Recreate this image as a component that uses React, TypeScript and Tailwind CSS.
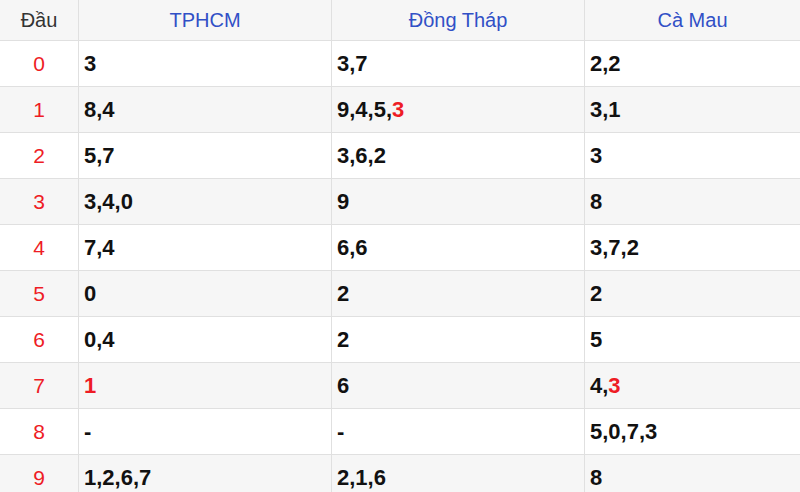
import React from "react";

type Part = { t: string; red?: boolean };

const rows: { d: string; cols: Part[][] }[] = [
  { d: "0", cols: [[{ t: "3" }], [{ t: "3,7" }], [{ t: "2,2" }]] },
  { d: "1", cols: [[{ t: "8,4" }], [{ t: "9,4,5," }, { t: "3", red: true }], [{ t: "3,1" }]] },
  { d: "2", cols: [[{ t: "5,7" }], [{ t: "3,6,2" }], [{ t: "3" }]] },
  { d: "3", cols: [[{ t: "3,4,0" }], [{ t: "9" }], [{ t: "8" }]] },
  { d: "4", cols: [[{ t: "7,4" }], [{ t: "6,6" }], [{ t: "3,7,2" }]] },
  { d: "5", cols: [[{ t: "0" }], [{ t: "2" }], [{ t: "2" }]] },
  { d: "6", cols: [[{ t: "0,4" }], [{ t: "2" }], [{ t: "5" }]] },
  { d: "7", cols: [[{ t: "1", red: true }], [{ t: "6" }], [{ t: "4," }, { t: "3", red: true }]] },
  { d: "8", cols: [[{ t: "-" }], [{ t: "-" }], [{ t: "5,0,7,3" }]] },
  { d: "9", cols: [[{ t: "1,2,6,7" }], [{ t: "2,1,6" }], [{ t: "8" }]] },
];

const provinces = ["TPHCM", "Đồng Tháp", "Cà Mau"];

export default function App() {
  return (
    <div className="w-[800px] h-[492px] overflow-hidden bg-white font-['Liberation_Sans',Arial,sans-serif]">
      <div className="grid grid-cols-[79px_253px_253px_1fr]">
        {/* Header */}
        <div className="h-[41px] flex items-center justify-center bg-[#f6f6f6] border-r border-b border-[#e0e0e0] text-[20px] text-[#333]">
          Đầu
        </div>
        {provinces.map((p, i) => (
          <div
            key={p}
            className={
              "h-[41px] flex items-center justify-center bg-[#f6f6f6] border-b border-[#e0e0e0] text-[20px] text-[#3150c6]" +
              (i < 2 ? " border-r" : "")
            }
          >
            {p}
          </div>
        ))}

        {/* Rows */}
        {rows.map((r, ri) => {
          const bg = ri % 2 === 1 ? "bg-[#f6f6f6]" : "bg-white";
          return (
            <React.Fragment key={r.d}>
              <div className={`h-[46px] flex items-center justify-center border-r border-b border-[#e0e0e0] text-[21px] text-[#ee1c25] ${bg}`}>
                {r.d}
              </div>
              {r.cols.map((c, ci) => (
                <div
                  key={ci}
                  className={
                    `h-[46px] flex items-center pl-[5px] border-b border-[#e0e0e0] text-[22px] font-bold text-[#111] ${bg}` +
                    (ci < 2 ? " border-r" : "")
                  }
                >
                  {c.map((part, pi) => (
                    <span key={pi} className={part.red ? "text-[#ee1c25]" : ""}>
                      {part.t}
                    </span>
                  ))}
                </div>
              ))}
            </React.Fragment>
          );
        })}
      </div>
    </div>
  );
}
